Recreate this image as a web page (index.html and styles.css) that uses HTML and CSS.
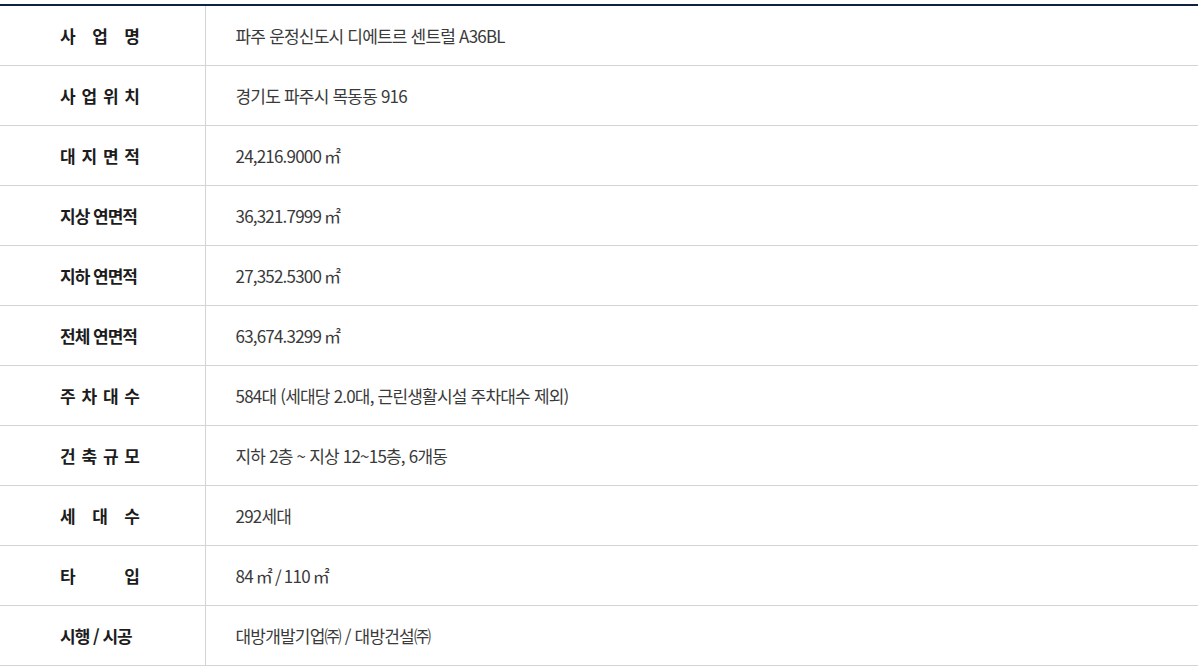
FILE: index.html
```html
<!DOCTYPE html>
<html lang="ko">
<head>
    <meta charset="UTF-8">
    <meta name="viewport" content="width=device-width, initial-scale=1.0">
    <title>사업개요</title>
    <link rel="stylesheet" href="styles.css">
</head>
<body>
    <div class="outline">
        <table class="info-table">
            <tbody>
                <tr>
                    <th><span class="label spread">사 업 명</span></th>
                    <td>파주 운정신도시 디에트르 센트럴 A36BL</td>
                </tr>
                <tr>
                    <th><span class="label spread">사 업 위 치</span></th>
                    <td>경기도 파주시 목동동 916</td>
                </tr>
                <tr>
                    <th><span class="label spread">대 지 면 적</span></th>
                    <td>24,216.9000 ㎡</td>
                </tr>
                <tr>
                    <th><span class="label">지상 연면적</span></th>
                    <td>36,321.7999 ㎡</td>
                </tr>
                <tr>
                    <th><span class="label">지하 연면적</span></th>
                    <td>27,352.5300 ㎡</td>
                </tr>
                <tr>
                    <th><span class="label">전체 연면적</span></th>
                    <td>63,674.3299 ㎡</td>
                </tr>
                <tr>
                    <th><span class="label spread">주 차 대 수</span></th>
                    <td>584대 (세대당 2.0대, 근린생활시설 주차대수 제외)</td>
                </tr>
                <tr>
                    <th><span class="label spread">건 축 규 모</span></th>
                    <td>지하 2층 ~ 지상 12~15층, 6개동</td>
                </tr>
                <tr>
                    <th><span class="label spread">세 대 수</span></th>
                    <td>292세대</td>
                </tr>
                <tr>
                    <th><span class="label spread">타 입</span></th>
                    <td>84 ㎡ / 110 ㎡</td>
                </tr>
                <tr>
                    <th><span class="label">시행 / 시공</span></th>
                    <td>대방개발기업㈜ / 대방건설㈜</td>
                </tr>
            </tbody>
        </table>
    </div>
</body>
</html>
```

FILE: styles.css
```css
body {
    margin: 0;
    padding: 0;
    background-color: #fff;
    font-family: "Noto Sans CJK KR", "Noto Sans", sans-serif;
}

.outline {
    padding-top: 4px;
    width: 1198px;
}

.info-table {
    width: 100%;
    border-collapse: collapse;
    border-top: 2px solid #0f2340;
}

.info-table th,
.info-table td {
    height: 59px;
    padding: 0;
    border-bottom: 1px solid #d4d4d4;
    font-size: 17px;
}

.info-table th {
    width: 205px;
    border-right: 1px solid #d4d4d4;
    color: #1c1c1c;
    font-weight: bold;
    text-align: left;
    padding-left: 60px;
    box-sizing: border-box;
    letter-spacing: -1px;
}

.info-table td {
    padding-left: 30px;
    color: #3a3a3a;
    font-weight: normal;
    letter-spacing: -0.8px;
}

.label {
    display: inline-block;
    white-space: nowrap;
}

.label.spread {
    width: 80px;
    text-align: justify;
    text-align-last: justify;
    letter-spacing: 0;
}
```
